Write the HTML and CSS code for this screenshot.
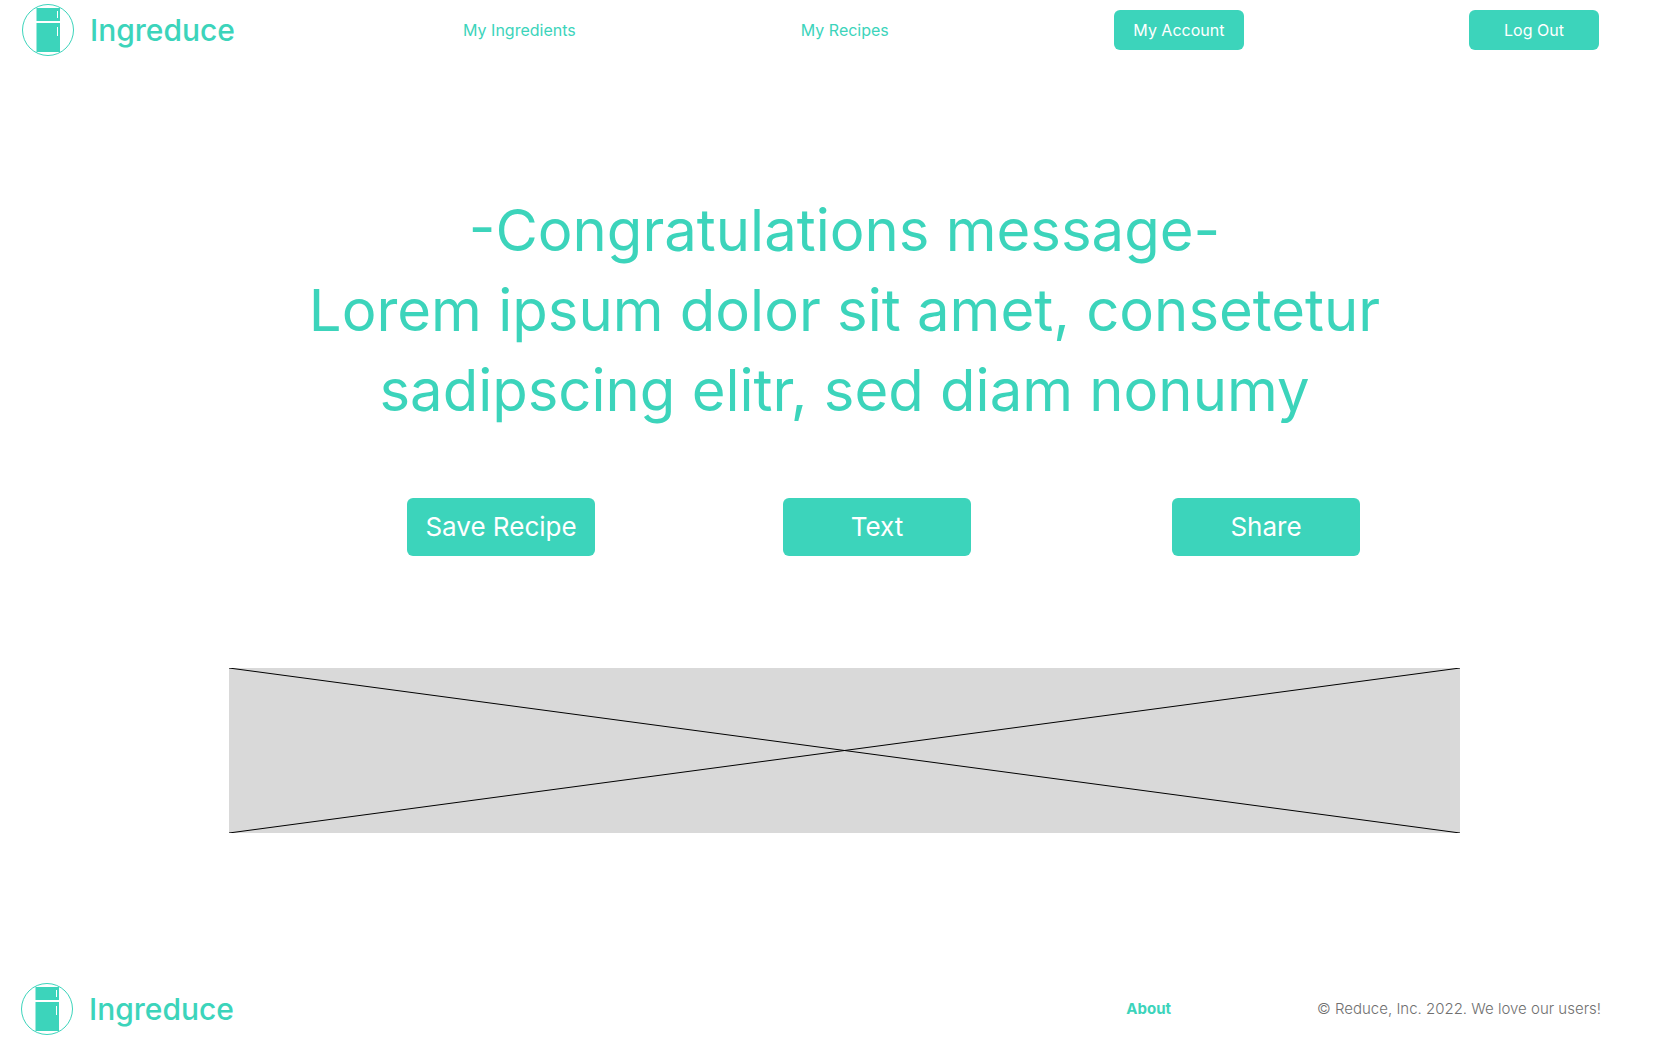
FILE: index.html
```html
<!DOCTYPE html>
<html lang="en">
<head>
  <meta charset="utf-8">
  <meta name="viewport" content="width=device-width, initial-scale=1">
  <title>Ingreduce</title>
  <link rel="stylesheet" href="styles.css">
</head>
<body>
  <header class="site-header">
    <a class="brand" href="#">
      <svg class="brand-icon" viewBox="0 0 52 52" aria-hidden="true">
        <circle cx="26" cy="26" r="25.5" fill="none" stroke="#3cd4bb"/>
        <path d="M14.5 4h23.5v13h-23.5zM14.5 19h23.5v29h-23.5z" fill="#3cd4bb"/>
        <path d="M35.5 7v7M35.5 23v9" stroke="#fff"/>
      </svg>
      <span class="brand-name">Ingreduce</span>
    </a>
    <a class="nav-link" href="#">My Ingredients</a>
    <a class="nav-link" href="#">My Recipes</a>
    <button class="button" type="button">My Account</button>
    <button class="button" type="button">Log Out</button>
  </header>

  <main class="content">
    <h1 class="message">-Congratulations message-<br>Lorem ipsum dolor sit amet, consetetur<br>sadipscing elitr, sed diam nonumy</h1>
    <div class="actions">
      <button class="button button-large" type="button">Save Recipe</button>
      <button class="button button-large" type="button">Text</button>
      <button class="button button-large" type="button">Share</button>
    </div>
    <svg class="placeholder" role="img" aria-label="Image placeholder">
      <line x1="0" y1="0" x2="100%" y2="100%"/>
      <line x1="0" y1="100%" x2="100%" y2="0"/>
    </svg>
  </main>

  <footer class="site-footer">
    <a class="brand" href="#">
      <svg class="brand-icon" viewBox="0 0 52 52" aria-hidden="true">
        <circle cx="26" cy="26" r="25.5" fill="none" stroke="#3cd4bb"/>
        <path d="M14.5 4h23.5v13h-23.5zM14.5 19h23.5v29h-23.5z" fill="#3cd4bb"/>
        <path d="M35.5 7v7M35.5 23v9" stroke="#fff"/>
      </svg>
      <span class="brand-name">Ingreduce</span>
    </a>
    <a class="about" href="#">About</a>
    <p class="copyright">© Reduce, Inc. 2022. We love our users!</p>
  </footer>
</body>
</html>
```
FILE: styles.css
```css
* {
  box-sizing: border-box;
}

body {
  display: flex;
  flex-direction: column;
  min-height: 100vh;
  margin: 0;
  background: #fff;
  color: #3cd4bb;
  font-family: Inter, "Open Sans", sans-serif;
  font-size: 15px;
  line-height: 20px;
}

a {
  color: inherit;
  text-decoration: none;
}

.site-header {
  display: flex;
  align-items: center;
  justify-content: space-between;
  height: 60px;
  padding: 0 81px 0 22px;
  font-size: 16px;
}

.brand {
  display: flex;
  align-items: center;
  gap: 16px;
  min-width: 216px;
}

.brand-icon {
  width: 52px;
  height: 52px;
}

.brand-name {
  font-size: 30px;
  font-weight: 500;
  line-height: 40px;
}

.nav-link {
  white-space: nowrap;
}

.button {
  width: 130px;
  height: 40px;
  padding: 0;
  border: 0;
  border-radius: 6px;
  background: #3cd4bb;
  color: #fff;
  font: inherit;
}

.content {
  padding: 130px 220px 0 229px;
}

.message {
  margin: 0;
  font-size: 58px;
  font-weight: 400;
  line-height: 80px;
  text-align: center;
}

.actions {
  display: grid;
  grid-template-columns: 376fr 389fr 188px;
  margin: 68px 100px 112px 178px;
}

.button-large {
  width: 188px;
  height: 58px;
  font-size: 26px;
}

.placeholder {
  display: block;
  width: 100%;
  height: 165px;
  background: #d9d9d9;
  stroke: #000;
}

.site-footer {
  display: flex;
  align-items: center;
  margin-top: auto;
  padding: 0 79px 3px 21px;
}

.about {
  margin-left: auto;
  font-weight: 700;
}

.copyright {
  margin: 0 0 0 146px;
  color: #707070;
  font-weight: 300;
}
```
